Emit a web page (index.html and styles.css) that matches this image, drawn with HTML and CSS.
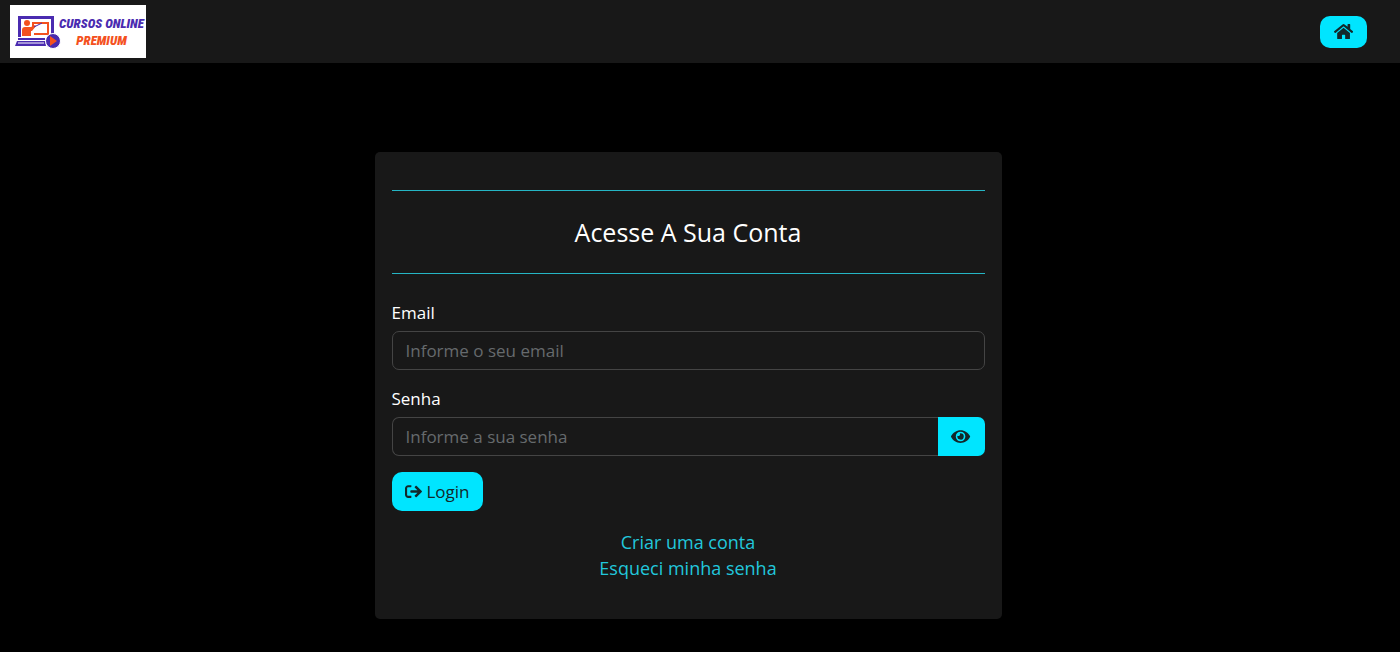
FILE: index.html
```html
<!DOCTYPE html>
<html lang="pt-br">
  <head>
    <meta charset="UTF-8" />
    <meta name="viewport" content="width=device-width, initial-scale=1.0" />
    <title>Cursos Online Premium - Login</title>
    <link rel="stylesheet" href="styles.css">
  </head>
  <body>
    <header class="navbar">
      <a class="logo" href="#" aria-label="Cursos Online Premium">
        <svg class="logo-img" viewBox="0 0 46 34" aria-hidden="true">
          <path d="M3 22V1h36v18h-3V4H6v18z" fill="#4a2bb0"/>
          <path d="M3 23h27v2H3zM2 26h28l1 5H0z" fill="#4a2bb0"/>
          <path d="M3 28h26" stroke="#fff" stroke-width="1"/>
          <path d="M17 7h17v13H19v-2h13V9H19v3h-2z" fill="#f4511e"/>
          <circle cx="12" cy="8" r="3" fill="#f4511e"/>
          <path d="M7 21v-6q0-3 3-3h6l4-2 1 1-4 5h-1v5z" fill="#f4511e"/>
          <path d="M19 12l8-4" stroke="#4a2bb0" stroke-width="1"/>
          <circle cx="38" cy="26" r="7.500" fill="#4a2bb0" stroke="#fff" stroke-width="1"/>
          <path d="M35 21l7 5-7 5z" fill="#f4511e"/>
        </svg>
        <span class="logo-text">
          <span>CURSOS ONLINE</span>
          <span class="orange">PREMIUM</span>
        </span>
      </a>
      <a class="btn btn-home" href="#" aria-label="Home">
        <svg class="icon" viewBox="0 0 576 512" aria-hidden="true">
          <path d="M280.37 148.26L96 300.11V464a16 16 0 0 0 16 16l112.06-.29a16 16 0 0 0 15.92-16V368a16 16 0 0 1 16-16h64a16 16 0 0 1 16 16v95.64a16 16 0 0 0 16 16.05L464 480a16 16 0 0 0 16-16V300L295.67 148.26a12.19 12.19 0 0 0-15.3 0zM571.6 251.47L488 182.56V44.05a12 12 0 0 0-12-12h-56a12 12 0 0 0-12 12v72.61L318.47 43a48 48 0 0 0-61 0L4.34 251.47a12 12 0 0 0-1.6 16.9l25.5 31A12 12 0 0 0 45.15 301l235.22-193.74a12.19 12.19 0 0 1 15.3 0L530.9 301a12 12 0 0 0 16.9-1.6l25.5-31a12 12 0 0 0-1.7-16.93z"/>
        </svg>
      </a>
    </header>

    <main class="container">
      <form class="card">
        <hr>
        <h1>Acesse A Sua Conta</h1>
        <hr>
        <div class="field">
          <label for="email">Email</label>
          <input type="email" id="email" placeholder="Informe o seu email" />
        </div>
        <div class="field">
          <label for="senha">Senha</label>
          <div class="input-group">
            <input type="password" id="senha" placeholder="Informe a sua senha" />
            <button class="btn btn-eye" type="button" aria-label="Mostrar senha">
              <svg class="icon" viewBox="0 0 576 512" aria-hidden="true">
                <path d="M572.52 241.4C518.29 135.59 410.93 64 288 64S57.68 135.64 3.48 241.41a32.35 32.35 0 0 0 0 29.19C57.71 376.41 165.07 448 288 448s230.32-71.64 284.52-177.41a32.35 32.35 0 0 0 0-29.19zM288 400a144 144 0 1 1 144-144 143.93 143.93 0 0 1-144 144zm0-240a95.31 95.31 0 0 0-25.31 3.79 47.85 47.85 0 0 1-66.9 66.9A95.78 95.78 0 1 0 288 160z"/>
              </svg>
            </button>
          </div>
        </div>
        <button class="btn btn-login" type="submit">
          <svg class="icon" viewBox="0 0 512 512" aria-hidden="true">
            <path d="M180 448H96c-53 0-96-43-96-96V160c0-53 43-96 96-96h84c6.600 0 12 5.400 12 12v40c0 6.600-5.400 12-12 12H96c-17.700 0-32 14.300-32 32v192c0 17.700 14.300 32 32 32h84c6.600 0 12 5.400 12 12v40c0 6.600-5.400 12-12 12zm117.900-303.100l77.600 71.100H184c-13.300 0-24 10.700-24 24v32c0 13.300 10.700 24 24 24h191.500l-77.600 71.100c-10.100 9.200-10.400 25-.8 34.700l21.900 21.900c9.300 9.300 24.500 9.400 33.900.1l152-150.800c9.500-9.400 9.500-24.700 0-34.100L353 88.300c-9.400-9.300-24.500-9.300-33.900.1l-21.900 21.900c-9.700 9.600-9.300 25.400.7 34.600z"/>
          </svg>
          Login
        </button>
        <div class="links">
          <a href="#">Criar uma conta</a>
          <a href="#">Esqueci minha senha</a>
        </div>
      </form>
    </main>
  </body>
</html>
```
FILE: styles.css
```css
* {
  box-sizing: border-box;
}
body {
  margin: 0;
  background-color: #000;
  color: #fff;
  font-family: 'Open Sans', 'Noto Sans', sans-serif;
  font-size: 17px;
  line-height: 26px;
}
.navbar {
  display: flex;
  align-items: center;
  justify-content: space-between;
  padding: 5px 33px 5px 10px;
  background-color: #181818;
}
.logo {
  display: flex;
  align-items: center;
  width: 136px;
  height: 53px;
  padding: 0 4px 0 5px;
  background-color: #fff;
  text-decoration: none;
}
.logo-img {
  flex: none;
  width: 46px;
  height: 34px;
}
.logo-text {
  display: flex;
  flex-direction: column;
  align-items: center;
  width: 81px;
  color: #4a2bb0;
  font-family: 'Roboto Condensed', Roboto, 'Liberation Sans', sans-serif;
  font-size: 13px;
  font-style: italic;
  font-weight: 900;
  line-height: 17px;
  white-space: nowrap;
}
.logo-text .orange {
  color: #f4511e;
}
.icon {
  height: 17px;
  fill: currentColor;
}
.btn {
  display: flex;
  align-items: center;
  justify-content: center;
  border: none;
  border-radius: 10px;
  background-color: #00e5ff;
  color: #12282b;
  font: inherit;
  cursor: pointer;
}
.btn-home {
  width: 47px;
  height: 32px;
}
.container {
  padding: 89px 24px 33px 0;
}
.card {
  max-width: 627px;
  margin: 0 auto;
  padding: 38px 17px;
  border-radius: 5px;
  background-color: #181818;
}
hr {
  margin: 0;
  border: none;
  border-top: 1px solid #25b5c4;
}
h1 {
  margin: 26px 0;
  font-size: 25px;
  font-weight: 500;
  line-height: 30px;
  text-align: center;
}
.field {
  margin-bottom: 16px;
}
hr + .field {
  margin-top: 26px;
}
label {
  display: block;
  margin-bottom: 5px;
}
input {
  display: block;
  width: 100%;
  height: 39px;
  padding: 0 13px;
  border: 1px solid #444;
  border-radius: 7px;
  background-color: transparent;
  color: #fff;
  font: inherit;
}
input::placeholder {
  color: #666a6d;
}
.input-group {
  display: flex;
}
.input-group input {
  flex: 1;
  border-right: none;
  border-radius: 7px 0 0 7px;
}
.btn-eye {
  width: 47px;
  border-radius: 0 7px 7px 0;
}
.btn-login {
  gap: 5px;
  height: 39px;
  padding: 0 13px;
}
.links {
  display: flex;
  flex-direction: column;
  align-items: center;
  margin-top: 18px;
  font-size: 18px;
}
.links a {
  color: #22c7dc;
  text-decoration: none;
}
```
